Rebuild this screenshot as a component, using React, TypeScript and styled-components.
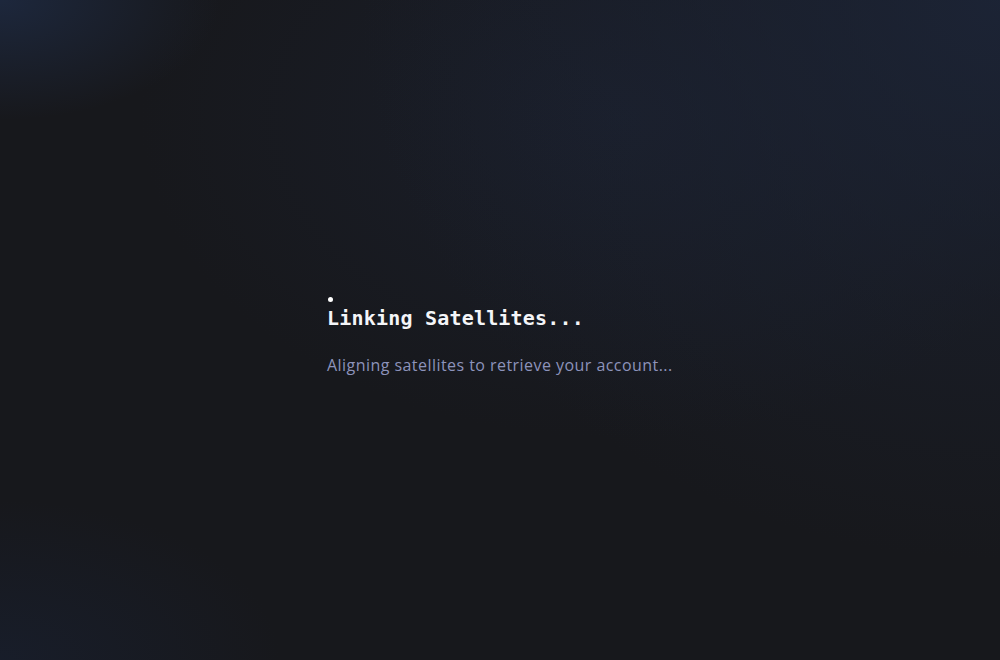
import React from "react";
import styled, { createGlobalStyle } from "styled-components";

const Global = createGlobalStyle`
  html, body { margin: 0; padding: 0; height: 100%; }
  body { background: #17181c; }
  #root { height: 100%; }
`;

const Screen = styled.div`
  width: 100%;
  height: 660px;
  display: flex;
  align-items: center;
  justify-content: center;
  background:
    radial-gradient(ellipse 220px 120px at 0% 0%, rgba(30, 42, 66, 0.85), rgba(30, 42, 66, 0) 100%),
    radial-gradient(ellipse 640px 560px at 100% 0%, rgba(28, 36, 54, 0.95), rgba(28, 36, 54, 0.35) 55%, rgba(28, 36, 54, 0) 100%),
    radial-gradient(ellipse 480px 320px at 62% 18%, rgba(27, 33, 48, 0.7), rgba(27, 33, 48, 0) 100%),
    radial-gradient(ellipse 280px 160px at 0% 100%, rgba(24, 30, 44, 0.85), rgba(24, 30, 44, 0) 100%),
    #17181c;
`;

const Loader = styled.div`
  display: flex;
  flex-direction: column;
  align-items: flex-start;
  width: 346px;
  margin-top: 14px;
`;

const Dot = styled.span`
  width: 5px;
  height: 5px;
  border-radius: 50%;
  background: #ffffff;
  margin-left: 1px;
`;

const Title = styled.h1`
  margin: 2px 0 0;
  font-family: "DejaVu Sans Mono", "Liberation Mono", monospace;
  font-weight: 700;
  font-size: 20px;
  line-height: 28px;
  letter-spacing: 0.2px;
  color: #f4f5f8;
`;

const Message = styled.p`
  margin: 21px 0 0;
  font-family: "Open Sans", "Noto Sans", sans-serif;
  font-size: 16px;
  line-height: 24px;
  letter-spacing: 0.45px;
  color: #8d93bb;
  white-space: nowrap;
`;

export default function App() {
  return (
    <>
      <Global />
      <Screen>
        <Loader>
          <Dot />
          <Title>Linking Satellites...</Title>
          <Message>Aligning satellites to retrieve your account...</Message>
        </Loader>
      </Screen>
    </>
  );
}
